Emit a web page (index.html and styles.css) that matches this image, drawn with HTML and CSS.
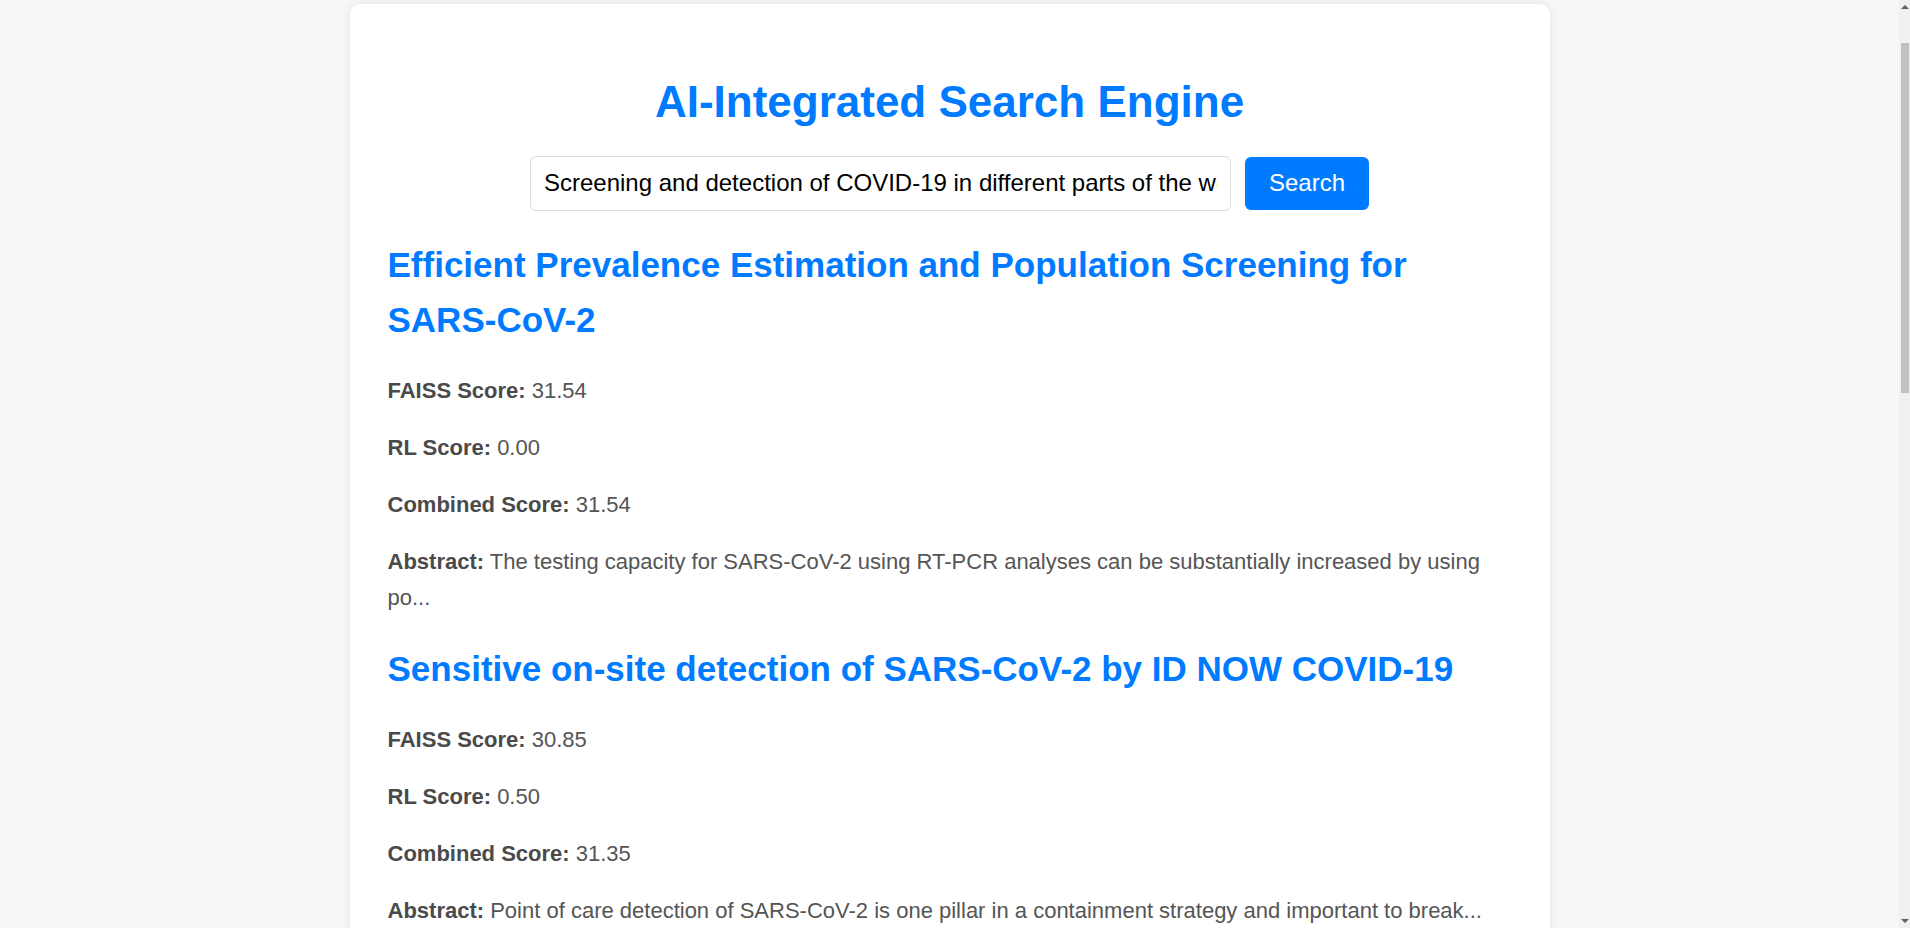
FILE: index.html
```html
<!DOCTYPE html>
<html lang="en">
<head>
<meta charset="utf-8">
<title>AI-Integrated Search Engine</title>
<link rel="stylesheet" href="styles.css">
</head>
<body>
<div class="page">
  <div class="container">
    <h1 class="title">AI-Integrated Search Engine</h1>
    <form class="search-form">
      <input class="search-input" type="text" value="Screening and detection of COVID-19 in different parts of the world">
      <button class="search-button" type="button">Search</button>
    </form>
    <div class="results">
      <div class="result">
        <h2 class="result-title">Efficient Prevalence Estimation and Population Screening for SARS-CoV-2</h2>
        <p><strong>FAISS Score:</strong> 31.54</p>
        <p><strong>RL Score:</strong> 0.00</p>
        <p><strong>Combined Score:</strong> 31.54</p>
        <p><strong>Abstract:</strong> The testing capacity for SARS-CoV-2 using RT-PCR analyses can be substantially increased by using po...</p>
      </div>
      <div class="result">
        <h2 class="result-title">Sensitive on-site detection of SARS-CoV-2 by ID NOW COVID-19</h2>
        <p><strong>FAISS Score:</strong> 30.85</p>
        <p><strong>RL Score:</strong> 0.50</p>
        <p><strong>Combined Score:</strong> 31.35</p>
        <p><strong>Abstract:</strong> Point of care detection of SARS-CoV-2 is one pillar in a containment strategy and important to break...</p>
      </div>
      <div class="result">
        <h2 class="result-title">Screening for SARS-CoV-2 infection in asymptomatic populations</h2>
        <p><strong>FAISS Score:</strong> 30.12</p>
        <p><strong>RL Score:</strong> 0.00</p>
        <p><strong>Combined Score:</strong> 30.12</p>
        <p><strong>Abstract:</strong> Widespread screening of asymptomatic individuals has been proposed as a strategy to limit the transmissi...</p>
      </div>
      <div class="result">
        <h2 class="result-title">Detection of COVID-19 using pooled sample testing</h2>
        <p><strong>FAISS Score:</strong> 29.87</p>
        <p><strong>RL Score:</strong> 0.00</p>
        <p><strong>Combined Score:</strong> 29.87</p>
        <p><strong>Abstract:</strong> Pooling of samples for RT-PCR testing allows laboratories to increase their throughput while conserv...</p>
      </div>
      <div class="result">
        <h2 class="result-title">Global variation in COVID-19 testing strategies</h2>
        <p><strong>FAISS Score:</strong> 29.40</p>
        <p><strong>RL Score:</strong> 0.00</p>
        <p><strong>Combined Score:</strong> 29.40</p>
        <p><strong>Abstract:</strong> Countries have adopted markedly different approaches to the screening and detection of SARS-CoV-2 in...</p>
      </div>
      <div class="result">
        <h2 class="result-title">Rapid antigen tests for community screening of COVID-19</h2>
        <p><strong>FAISS Score:</strong> 29.02</p>
        <p><strong>RL Score:</strong> 0.00</p>
        <p><strong>Combined Score:</strong> 29.02</p>
        <p><strong>Abstract:</strong> Rapid antigen detection tests offer a fast and inexpensive alternative to laboratory-based molecula...</p>
      </div>
    </div>
  </div>
</div>
<div class="scrollbar" aria-hidden="true">
  <div class="scroll-arrow scroll-arrow-up"></div>
  <div class="scroll-track">
    <div class="scroll-thumb"></div>
  </div>
  <div class="scroll-arrow scroll-arrow-down"></div>
</div>
</body>
</html>
```

FILE: styles.css
```css
html,
body {
  height: 100%;
  margin: 0;
  overflow: hidden;
}

body {
  display: flex;
  background: #f6f7f9;
  font-family: "Liberation Sans", Arial, sans-serif;
  font-size: 22px;
  line-height: 1.6;
  color: #555;
}

.page {
  box-sizing: border-box;
  flex: 1;
  height: 100vh;
  overflow-y: auto;
  padding: 4px 0 24px;
  background: #f6f7f9;
  scrollbar-width: none;
}

.page::-webkit-scrollbar {
  display: none;
}

/* window scrollbar */
.scrollbar {
  display: flex;
  flex-direction: column;
  width: 11px;
  height: 100vh;
  background: #f0f0f0;
}

.scroll-arrow {
  height: 17px;
  display: flex;
  justify-content: center;
}

.scroll-arrow-up {
  align-items: flex-start;
  padding-top: 5px;
  box-sizing: border-box;
}

.scroll-arrow-down {
  align-items: flex-end;
  padding-bottom: 5px;
  box-sizing: border-box;
}

.scroll-arrow-up::before,
.scroll-arrow-down::before {
  content: "";
  width: 0;
  height: 0;
  border-left: 4px solid transparent;
  border-right: 4px solid transparent;
}

.scroll-arrow-up::before {
  border-bottom: 4px solid #606060;
}

.scroll-arrow-down::before {
  border-top: 4px solid #606060;
}

.scroll-track {
  flex: 1;
  padding: 26px 1px 0 2px;
}

.scroll-thumb {
  height: 350px;
  background: #c1c1c1;
}

.container {
  box-sizing: border-box;
  width: 1200px;
  margin: 0 auto;
  padding: 38px;
  background: #fff;
  border-radius: 10px;
  box-shadow: 0 0 12px rgba(0, 0, 0, 0.08);
}

.title {
  margin: 34px 0 27px;
  font-size: 44px;
  line-height: 1.2;
  font-weight: bold;
  text-align: center;
  color: #007bff;
}

.search-form {
  display: flex;
  justify-content: center;
  align-items: center;
  gap: 14px;
  margin: 0;
}

.search-input {
  box-sizing: border-box;
  width: 701px;
  height: 55px;
  padding: 0 13px;
  border: 1px solid #ddd;
  border-radius: 6px;
  font-family: "Liberation Sans", Arial, sans-serif;
  font-size: 24px;
  color: #000;
  background: #fff;
  outline: none;
}

.search-button {
  box-sizing: border-box;
  height: 53px;
  padding: 0 24px;
  border: none;
  border-radius: 6px;
  background: #007bff;
  color: #fff;
  font-family: "Liberation Sans", Arial, sans-serif;
  font-size: 24px;
  cursor: pointer;
}

.result-title {
  margin: 26px 0 26px;
  font-size: 35px;
  line-height: 55px;
  font-weight: bold;
  color: #007bff;
}

.result p {
  margin: 22px 0;
}

.result strong {
  color: #4a4a4a;
}
```
